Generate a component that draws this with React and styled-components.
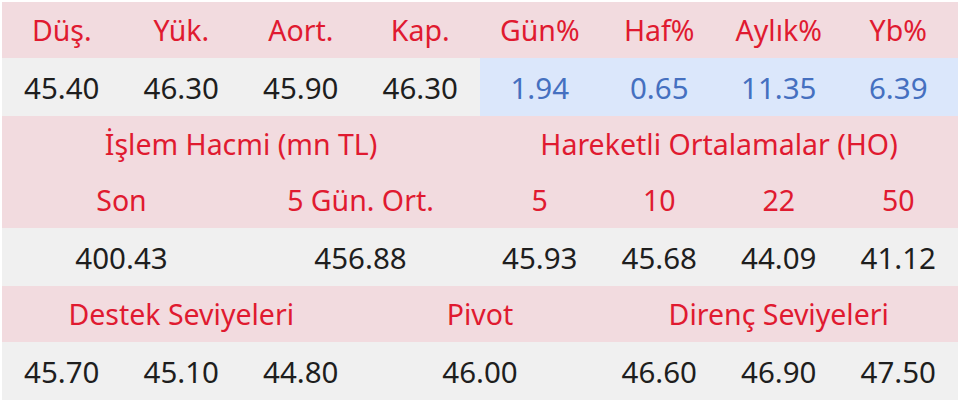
import React from "react";
import styled, { createGlobalStyle } from "styled-components";

const Global = createGlobalStyle`
  html, body { margin: 0; padding: 0; background: #ffffff; }
  body { font-family: "Noto Sans", "DejaVu Sans", sans-serif; }
`;

const Page = styled.div`
  padding: 2px;
  width: 956px;
`;

const Grid = styled.div`
  display: grid;
  grid-template-columns: repeat(8, 1fr);
`;

const Cell = styled.div`
  grid-column: span ${(p) => p.$span || 1};
  display: flex;
  align-items: center;
  justify-content: center;
  white-space: nowrap;
`;

const HeadCell = styled(Cell)`
  height: 56px;
  font-size: 28.5px;
  background: #f2dbdf;
  color: #e01a30;
`;

const ValueCell = styled(Cell)`
  height: 58px;
  font-size: 29.5px;
  background: ${(p) => (p.$blue ? "#dbe7fb" : "#f0f0f0")};
  color: ${(p) => (p.$blue ? "#4570c0" : "#1e1e1e")};
`;

const rows = [
  {
    kind: "head",
    cells: [["Düş."], ["Yük."], ["Aort."], ["Kap."], ["Gün%"], ["Haf%"], ["Aylık%"], ["Yb%"]],
  },
  {
    kind: "value",
    cells: [
      ["45.40"], ["46.30"], ["45.90"], ["46.30"],
      ["1.94", 1, true], ["0.65", 1, true], ["11.35", 1, true], ["6.39", 1, true],
    ],
  },
  { kind: "head", cells: [["İşlem Hacmi (mn TL)", 4], ["Hareketli Ortalamalar (HO)", 4]] },
  { kind: "head", cells: [["Son", 2], ["5 Gün. Ort.", 2], ["5"], ["10"], ["22"], ["50"]] },
  { kind: "value", cells: [["400.43", 2], ["456.88", 2], ["45.93"], ["45.68"], ["44.09"], ["41.12"]] },
  { kind: "head", cells: [["Destek Seviyeleri", 3], ["Pivot", 2], ["Direnç Seviyeleri", 3]] },
  {
    kind: "value",
    cells: [["45.70"], ["45.10"], ["44.80"], ["46.00", 2], ["46.60"], ["46.90"], ["47.50"]],
  },
];

export default function App() {
  return (
    <>
      <Global />
      <Page>
        <Grid>
          {rows.map((row, ri) =>
            row.cells.map(([text, span, blue], ci) =>
              row.kind === "head" ? (
                <HeadCell key={`${ri}-${ci}`} $span={span}>
                  {text}
                </HeadCell>
              ) : (
                <ValueCell key={`${ri}-${ci}`} $span={span} $blue={blue}>
                  {text}
                </ValueCell>
              )
            )
          )}
        </Grid>
      </Page>
    </>
  );
}
